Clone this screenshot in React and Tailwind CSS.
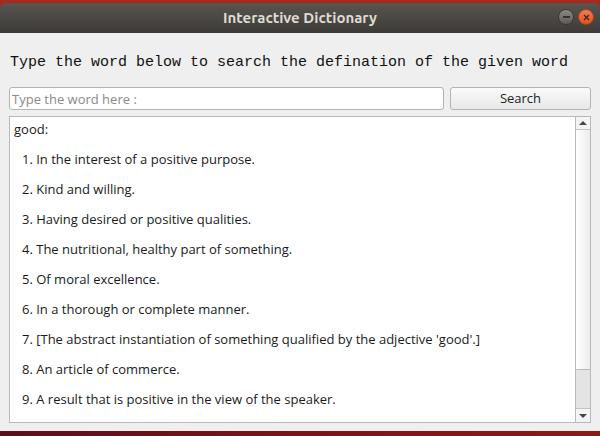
const items = [
  "In the interest of a positive purpose.",
  "Kind and willing.",
  "Having desired or positive qualities.",
  "The nutritional, healthy part of something.",
  "Of moral excellence.",
  "In a thorough or complete manner.",
  "[The abstract instantiation of something qualified by the adjective 'good'.]",
  "An article of commerce.",
  "A result that is positive in the view of the speaker.",
];

function TitleBar() {
  return (
    <div className="relative flex h-[30px] items-center justify-center rounded-t-[6px] bg-gradient-to-b from-[#57554f] to-[#3c3b37]">
      <span className="font-['Ubuntu','Open_Sans',sans-serif] text-[15px] font-bold text-[#dfdbd2]">
        Interactive Dictionary
      </span>
      <div className="absolute right-[6px] top-[6px] flex items-center gap-[4px]">
        <div className="flex h-[16px] w-[16px] items-center justify-center rounded-full bg-gradient-to-b from-[#8a8984] to-[#5d5c58] border border-[#3a3935]">
          <div className="h-[1.5px] w-[7px] bg-[#34332f]" />
        </div>
        <div className="flex h-[16px] w-[16px] items-center justify-center rounded-full bg-gradient-to-b from-[#f57a4f] to-[#e0521f] border border-[#b63f13]">
          <svg width="7" height="7" viewBox="0 0 7 7">
            <path d="M1 1L6 6M6 1L1 6" stroke="#4a2415" strokeWidth="1.3" />
          </svg>
        </div>
      </div>
    </div>
  );
}

function ScrollBar() {
  return (
    <div className="flex w-[15px] flex-col border-l border-[#b9b9b9] bg-[#e4e4e4]">
      <div className="flex h-[13px] items-center justify-center border-b border-[#c3c3c3] bg-[#f4f4f4]">
        <div className="h-0 w-0 border-x-[4px] border-b-[4px] border-x-transparent border-b-[#444]" />
      </div>
      <div className="h-[240px] border-b border-[#b9b9b9] bg-gradient-to-r from-[#ffffff] to-[#ececec]" />
      <div className="flex-1" />
      <div className="flex h-[14px] items-center justify-center border-t border-[#c3c3c3] bg-[#f4f4f4]">
        <div className="h-0 w-0 border-x-[4px] border-t-[4px] border-x-transparent border-t-[#444]" />
      </div>
    </div>
  );
}

export default function App() {
  return (
    <div className="flex h-[436px] w-[600px] flex-col bg-[#a8281d]">
      <div className="h-[3px]" />
      <TitleBar />
      <div className="flex flex-1 flex-col bg-[#efefef] px-[9px]">
        <p className="mt-[20px] h-[20px] font-['Liberation_Mono',monospace] text-[15px] leading-[20px] text-[#111] pl-[1px]">
          Type the word below to search the defination of the given word
        </p>
        <div className="mt-[14px] flex gap-[6px]">
          <input
            className="h-[23px] w-[435px] rounded-[3px] border border-[#b3b3b3] bg-white px-[2px] font-['Open_Sans',sans-serif] text-[13px] text-[#222] placeholder-[#8a8a8a] outline-none"
            placeholder="Type the word here :"
          />
          <button className="h-[23px] flex-1 rounded-[3px] border border-[#b3b3b3] bg-gradient-to-b from-[#fafafa] to-[#e8e8e8] font-['Open_Sans',sans-serif] text-[13px] text-[#222]">
            Search
          </button>
        </div>
        <div className="mt-[6px] flex h-[307px] border border-[#b9b9b9] bg-white">
          <div className="flex-1 pl-[4px] pt-[2px] font-['Open_Sans',sans-serif] text-[13px] leading-[20px] text-[#1a1a1a]">
            <p>good:</p>
            <ol className="pl-[8px]">
              {items.map((t, i) => (
                <li key={i} className="mt-[10px]">
                  {i + 1}. {t}
                </li>
              ))}
            </ol>
          </div>
          <ScrollBar />
        </div>
        <div className="flex-1" />
      </div>
      <div className="h-[5px] bg-gradient-to-r from-[#5b0e1e] via-[#7a1418] to-[#8a1a16]" />
    </div>
  );
}
